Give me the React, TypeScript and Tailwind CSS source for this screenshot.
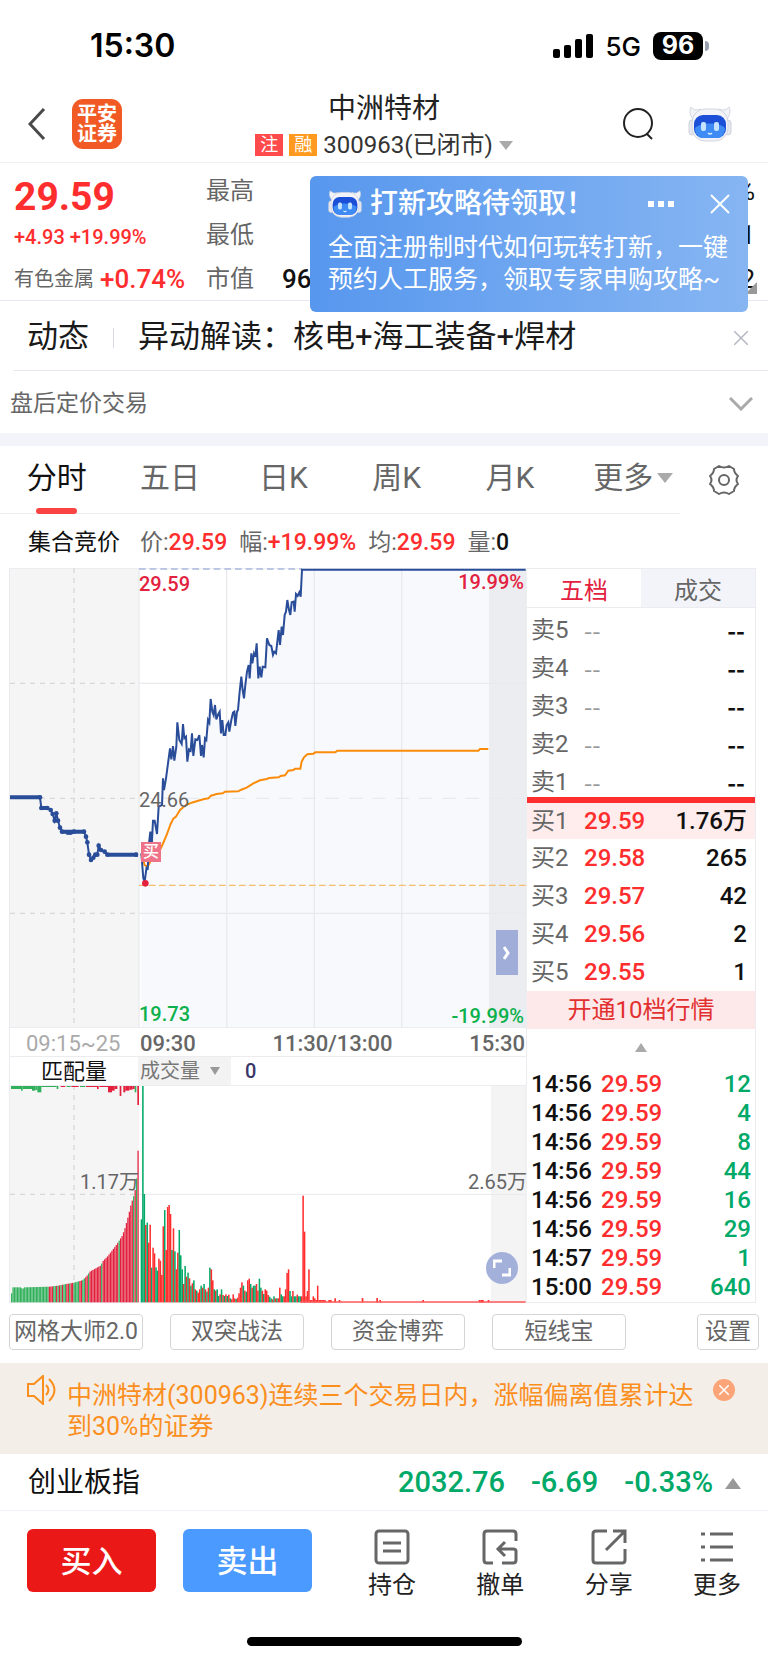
import { useState } from 'react';

const SELLS = ['卖5', '卖4', '卖3', '卖2', '卖1'];

const BUYS = [
  { name: '买1', price: '29.59', volume: '1.76万' },
  { name: '买2', price: '29.58', volume: '265' },
  { name: '买3', price: '29.57', volume: '42' },
  { name: '买4', price: '29.56', volume: '2' },
  { name: '买5', price: '29.55', volume: '1' },
];

const TICKS = [
  { time: '14:56', price: '29.59', volume: '12' },
  { time: '14:56', price: '29.59', volume: '4' },
  { time: '14:56', price: '29.59', volume: '8' },
  { time: '14:56', price: '29.59', volume: '44' },
  { time: '14:56', price: '29.59', volume: '16' },
  { time: '14:56', price: '29.59', volume: '29' },
  { time: '14:57', price: '29.59', volume: '1' },
  { time: '15:00', price: '29.59', volume: '640' },
];

// Chart units are a third of a pixel, the time axis runs from 27 to 1581
const AUCTION_LINE =
  '30,712 120,712 124,744 142,744 152,750 158,762 164,782 169,760 174,782 180,803 186,815 204,818 212,818 222,815 252,815 258,830 262,847 267,884 273,900 280,893 286,884 292,884 296,857 303,870 314,875 322,884 408,884';

const AUCTION_DOTS = AUCTION_LINE.split(' ').map((p) => p.split(',').map(Number));

const PRICE_LINE =
  '424,880 430,955 434,965 440,920 443,930 447,850 451,815 455,860 459,782 464,782 471,822 476,740 486,735 489,655 492,690 498,655 504,610 510,565 514,598 519,558 523,602 529,560 532,487 538,540 545,552 549,492 553,535 558,530 562,605 567,568 572,572 576,520 580,588 586,538 592,540 598,525 603,588 606,555 611,592 615,535 619,540 624,480 628,488 632,417 637,455 641,465 645,435 649,478 655,462 659,455 663,520 667,480 671,525 676,525 680,495 685,487 688,515 694,480 699,458 703,455 706,498 711,455 714,450 719,395 724,350 728,390 732,415 736,375 741,335 746,315 749,355 754,280 757,310 762,280 766,290 770,250 775,355 779,320 784,352 788,320 796,322 801,235 808,255 814,258 819,285 823,275 828,280 836,210 840,255 845,200 849,225 854,165 858,155 862,120 867,150 871,165 875,127 881,125 884,155 888,102 893,108 898,97 902,110 906,29 1577,29';

const AVERAGE_LINE =
  '424,880 434,915 443,920 455,897 480,870 487,855 500,825 512,792 520,776 528,770 540,750 558,735 575,728 592,723 610,718 625,715 633,707 650,702 668,700 675,695 715,694 722,690 740,683 760,670 780,661 800,657 808,654 836,652 842,648 855,646 865,632 880,630 885,626 901,626 905,605 912,592 922,583 940,581 946,577 1006,577 1012,572 1435,572 1440,567 1465,567';

// Top of each one-minute volume bar, 'g' for a falling minute and 'r' for a rising one
const VOLUME_BARS =
  '598g 198g 522g 615r 608g 668r 614r 743g 683r 700r 742g 752g 716r 722r 765r 619r 570g 690r 561r 555r 582r 690g 625r 694g 748r 698r 630g 706g 748g 792r 738g 770r 758g 775r 797g 790r 781g 808r 812g 818r 808r 797g 803r 792g 808r 815g 803r 743g 748r 781r 808g 812r 808g 828g 823r 808g 825r 828g 823r 828g 824r 835g 838r 823r 835r 837g 833r 820r 803r 787r 797g 812r 815g 781r 776r 792g 803r 797g 797g 792r 812r 776g 803g 812r 822g 808r 812r 825r 830g 835g 838r 829g 835r 835g 835r 803r 823g 829g 829r 808r 759r 748r 813g 829g 813r 829g 829g 824r 829g 829g 829r 527r 635r 829r 813r 748r 840r 840r 829r 835r 840r 797r 840r 840r 840r 840r 840r'
    .split(' ')
    .map((bar, i) => ({ x: 422 + i * 4.37, top: parseInt(bar), rising: bar.endsWith('r') }));

const VOLUME_BLIPS = [
  [985, 840], [990, 840], [1003, 835], [1016, 840], [1085, 834], [1129, 834],
  [1138, 840], [1267, 840], [1436, 840], [1441, 840], [1446, 840], [1463, 840],
];

const MATCH_STEPS = [
  [33, 820], [37, 802], [60, 802], [66, 807], [72, 802], [148, 800], [172, 797], [197, 792], [220, 788],
  [245, 781], [257, 770], [268, 755], [280, 748], [300, 737], [308, 722], [320, 710], [332, 695],
  [345, 678], [357, 660], [365, 647], [373, 625], [380, 600], [386, 576], [392, 550], [398, 533],
  [403, 515], [408, 475], [412, 470],
];

const MATCH_BARS = Array.from({ length: 88 }, (_, i) => {
  const x = 33 + i * 4.36;
  if (x >= 412) return { x, top: 392, green: false };
  const next = Math.max(1, MATCH_STEPS.findIndex((s) => s[0] > x));
  const [x0, y0] = MATCH_STEPS[next - 1];
  const [x1, y1] = MATCH_STEPS[next];
  return { x, top: y0 + ((x - x0) / (x1 - x0)) * (y1 - y0), green: isGreenMatch(i) };
});

function isGreenMatch(i: number) {
  if (i < 26) return true;
  return [29, 30, 32, 34, 36, 37, 40, 43, 44, 45, 46, 49, 50, 53, 62, 74, 84, 86].includes(i);
}

const UNMATCHED_BARS = [
  [33, 30, 9, 'g'], [63, 5, 14, 'g'], [68, 28, 9, 'g'], [96, 10, 14, 'g'], [106, 6, 12, 'g'], [112, 12, 19, 'g'],
  [124, 46, 3, 'g'], [170, 5, 9, 'g'], [182, 14, 3, 'r'], [200, 12, 3, 'g'], [214, 22, 3, 'r'], [240, 16, 3, 'g'],
  [258, 34, 3, 'r'], [291, 5, 9, 'r'], [298, 26, 3, 'r'], [324, 12, 19, 'r'], [336, 8, 14, 'r'], [344, 8, 9, 'r'],
  [359, 5, 30, 'r'], [370, 6, 19, 'r'], [376, 12, 14, 'r'], [388, 10, 11, 'r'], [398, 6, 9, 'r'], [404, 5, 19, 'g'], [412, 5, 57, 'r'],
] as const;

const PERIODS = ['分时', '五日', '日K', '周K', '月K'];

function Robot({ className }: { className: string }) {
  return (
    <svg viewBox="0 0 44 36" className={className} aria-hidden="true">
      <path d="M3 1c3 4 7 3 10 2l-7 11C2 10 1 5 3 1ZM41 1c-3 4-7 3-10 2l7 11c4-4 5-9 3-13Z" fill="#f3f4f8" stroke="#d4d6df" />
      <rect x="1" y="14" width="6" height="15" rx="3" fill="#e6e8f0" stroke="#cfd2de" />
      <rect x="37" y="14" width="6" height="15" rx="3" fill="#e6e8f0" stroke="#cfd2de" />
      <rect x="4" y="3" width="36" height="32" rx="13" fill="#f2f3f8" stroke="#d4d6df" />
      <rect x="6" y="9" width="32" height="23" rx="9" fill="#1b4fd8" />
      <path d="M7 22c6-6 24-6 30 0 0 6-3 10-8 10H15c-5 0-8-4-8-10Z" fill="#3f8bf6" />
      <rect x="13" y="16" width="5" height="9" rx="2" fill="#c6e4ff" />
      <rect x="26" y="16" width="5" height="9" rx="2" fill="#c6e4ff" />
      <path d="M20 27q2 2 4 0" stroke="#d8edff" strokeWidth="1.5" fill="none" />
    </svg>
  );
}

function Triangle({ up, className }: { up?: boolean; className: string }) {
  return (
    <svg viewBox="0 0 16 10" preserveAspectRatio="none" className={className} aria-hidden="true">
      <path d={up ? 'M0 10h16L8 0Z' : 'M0 0h16L8 10Z'} fill="currentColor" />
    </svg>
  );
}

function StatusBar() {
  return (
    <div className="flex h-[92px] items-center justify-between pr-[59px] pl-[90px] font-['Inter',sans-serif] text-black">
      <span className="text-[32px] font-semibold">15:30</span>
      <div className="flex items-center">
        <svg viewBox="0 0 40 26" className="h-[26px] w-10" aria-hidden="true">
          <rect x="0" y="16" width="7" height="9" rx="2" />
          <rect x="11" y="12" width="7" height="13" rx="2" />
          <rect x="22" y="6" width="7" height="19" rx="2" />
          <rect x="33" y="1" width="7" height="24" rx="2" />
        </svg>
        <span className="ml-3 text-[26px] font-medium">5G</span>
        <span className="ml-3 flex h-7 w-[50px] items-center justify-center rounded-lg bg-black text-[25px] font-bold text-white">96</span>
        <span className="ml-0.5 h-2.5 w-1 rounded-r-full bg-gray-400" />
      </div>
    </div>
  );
}

function Header() {
  return (
    <header className="flex h-[71px] items-center justify-between border-b border-[#f0f0f2] pr-9 pl-7">
      <div className="flex w-[188px] items-center gap-[26px] pb-1.5">
        <button aria-label="返回">
          <svg viewBox="0 0 18 32" className="h-8 w-[18px]" fill="none" stroke="#4a4a4a" strokeWidth="3">
            <path d="M16 1 2 16l14 15" />
          </svg>
        </button>
        <a href="#home" className="flex h-[50px] w-[50px] flex-col items-center justify-center rounded-[11px] bg-[#f15a24] text-[20px] leading-5 font-bold text-white">
          平安
          <br />
          证券
        </a>
      </div>
      <div className="flex flex-col items-center">
        <h1 className="text-[28px] leading-9 font-normal text-[#222]">中洲特材</h1>
        <button className="flex items-center text-[24px] leading-9 text-[#333]">
          <span className="mr-1.5 flex h-[22px] w-7 items-center justify-center bg-[#ff4b4b] text-[18px] text-white">注</span>
          <span className="mr-1.5 flex h-[22px] w-7 items-center justify-center bg-[#ff9a1f] text-[18px] text-white">融</span>
          300963(已闭市)
          <Triangle className="ml-1.5 h-[9px] w-3.5 text-[#aaa]" />
        </button>
      </div>
      <div className="flex w-[180px] items-center justify-end gap-[34px] pb-1.5">
        <button aria-label="搜索">
          <svg viewBox="0 0 32 34" className="h-[34px] w-8" fill="none" stroke="#222" strokeWidth="2">
            <circle cx="16" cy="16" r="14" />
            <path d="m25 27 5 5" />
          </svg>
        </button>
        <button aria-label="智能客服">
          <Robot className="h-9 w-11" />
        </button>
      </div>
    </header>
  );
}

function Promo({ onClose }: { onClose: () => void }) {
  return (
    <div className="absolute top-[13px] right-5 h-[136px] w-[438px] rounded-md bg-linear-to-r from-[#5797ee] to-[#86b5f2] px-[18px] pt-2.5 text-white">
      <div className="flex h-9 items-center">
        <Robot className="h-7 w-[34px]" />
        <strong className="ml-2 text-[28px] font-medium">打新攻略待领取！</strong>
        <button aria-label="更多选项" className="ml-auto flex gap-1">
          <span className="h-1.5 w-1.5 bg-white" />
          <span className="h-1.5 w-1.5 bg-white" />
          <span className="h-1.5 w-1.5 bg-white" />
        </button>
        <button aria-label="关闭" className="ml-9" onClick={onClose}>
          <svg viewBox="0 0 20 20" className="h-5 w-5" stroke="currentColor" strokeWidth="2">
            <path d="m1 1 18 18M19 1 1 19" />
          </svg>
        </button>
      </div>
      <p className="mt-2.5 text-[25px] leading-8 whitespace-nowrap">
        全面注册制时代如何玩转打新，一键
        <br />
        预约人工服务，领取专家申购攻略~
      </p>
    </div>
  );
}

function Quote() {
  const [promo, setPromo] = useState(true);

  return (
    <section className="relative flex h-[138px] border-b border-[#e6e8f1] pr-[13px] pl-3.5">
      <div className="flex w-48 flex-col text-[#ff2e2e]">
        <span className="mt-2.5 text-[39px] leading-12 font-bold">29.59</span>
        <span className="text-[20px] leading-8 font-medium">+4.93 +19.99%</span>
        <span className="mt-1.5 flex items-center gap-1.5 text-[26px] leading-10 font-medium">
          <span className="text-[20px] font-normal text-[#666]">有色金属</span>+0.74%
        </span>
      </div>
      <dl className="flex-1 pt-1.5 text-[24px] leading-11 text-[#666]">
        <div className="flex justify-between">
          <dt>最高</dt>
          <dd className="text-[26px] text-[#111]">%</dd>
        </div>
        <div className="flex justify-between">
          <dt>最低</dt>
          <dd className="text-[26px] text-[#111]">1</dd>
        </div>
        <div className="flex">
          <dt>市值</dt>
          <dd className="ml-7 text-[26px] font-medium text-[#111]">96</dd>
          <dd className="ml-auto text-[26px] text-[#111]">2</dd>
        </div>
      </dl>
      <svg viewBox="0 0 12 12" className="absolute right-[11px] bottom-1.5 h-3 w-3" aria-hidden="true">
        <path d="M12 0v12H0Z" fill="#999" />
      </svg>
      {promo && <Promo onClose={() => setPromo(false)} />}
    </section>
  );
}

function News() {
  return (
    <>
      <div className="ml-[13px] flex h-[70px] items-center border-b border-[#e6e8f1] pt-1 pr-5 pl-3.5 text-[31px] text-[#1a1a1a]">
        <span>动态</span>
        <span className="ml-6 h-5 w-px bg-[#d5d8e2]" />
        <a href="#news" className="ml-6">异动解读：核电+海工装备+焊材</a>
        <button aria-label="关闭" className="ml-auto">
          <svg viewBox="0 0 14 14" className="h-3.5 w-3.5" stroke="#b5b8c4" strokeWidth="1.5">
            <path d="m0 0 14 14M14 0 0 14" />
          </svg>
        </button>
      </div>
      <button className="flex h-[62px] w-full items-center justify-between pt-1 pr-[15px] pl-2.5 text-[23px] text-[#666]">
        盘后定价交易
        <svg viewBox="0 0 24 14" className="h-3.5 w-6" fill="none" stroke="#aaa" strokeWidth="3">
          <path d="m1 1 11 11L23 1" />
        </svg>
      </button>
      <div className="h-[13px] bg-[#f3f4f9]" />
    </>
  );
}

function PeriodTabs() {
  const [period, setPeriod] = useState('分时');

  return (
    <nav className="flex h-[68px] pr-[29px]">
      <div className="grid flex-1 grid-cols-6 border-b border-[#eeeef0] text-[30px] text-[#666]">
        {PERIODS.map((p) => (
          <button key={p} onClick={() => setPeriod(p)} className={`relative flex items-center justify-center pb-1 ${p === period ? 'text-[#111]' : ''}`}>
            {p}
            {p === period && <span className="absolute -bottom-px h-1.5 w-[41px] rounded-sm bg-[#fa4444]" />}
          </button>
        ))}
        <button className="flex items-center justify-center gap-1 pb-1 pl-5">
          更多
          <Triangle className="h-2.5 w-4 text-[#aaa]" />
        </button>
      </div>
      <button aria-label="图表设置" className="ml-[29px]">
        <svg viewBox="0 0 30 30" className="h-[30px] w-[30px]" fill="none" stroke="#666" strokeWidth="2" strokeLinejoin="round">
          <path d="M10 1q5 3 10 0l5 3q0 4 4 7-3 4 0 8-4 3-4 7l-5 3q-5-3-10 0l-5-3q0-4-4-7 3-4 0-8 4-3 4-7Z" />
          <circle cx="15" cy="15" r="5" />
        </svg>
      </button>
    </nav>
  );
}

function PriceChart() {
  return (
    <div className="relative h-[460px]">
      <svg viewBox="27 24 1554 1380" preserveAspectRatio="none" className="h-full w-full">
        <rect x="27" y="24" width="390" height="1380" fill="#f5f5f5" />
        <polygon points={`424,1404 ${PRICE_LINE} 1577,1404`} fill="#f7f9fd" />
        <rect x="1467" y="30" width="112" height="1374" fill="#ecedf1" />
        <g stroke="#e9eaee" strokeWidth="4" fill="none">
          <path d="M28 24h1550v1380H28ZM417 24v1380M680 24v1380M943 24v1380M1205 24v1380M417 370h1160M417 1060h1160" />
          <path d="M417 715h1160" strokeDasharray="40 30" />
        </g>
        <path d="M222 24v1380M30 370h387M30 715h387M30 1060h387" stroke="#d8d8d8" strokeWidth="4" strokeDasharray="15 15" />
        <path d="M417 976h1160" stroke="#f5bd6c" strokeWidth="4" strokeDasharray="20 10" />
        <path d="M417 27h490" stroke="#a9b8dc" strokeWidth="5" strokeDasharray="20 12" />
        <polyline points={AVERAGE_LINE} fill="none" stroke="#fb8c0a" strokeWidth="6" />
        <polyline points={PRICE_LINE} fill="none" stroke="#2a4d99" strokeWidth="6" />
        <polyline points={AUCTION_LINE} fill="none" stroke="#2a4d99" strokeWidth="6" />
        <path d="M30 712h92M122 744h22M186 815h66M322 884h92" stroke="#2a4d99" strokeWidth="12" />
        {AUCTION_DOTS.slice(1).map(([x, y]) => (
          <circle key={x} cx={x} cy={y} r="7" fill="#2a4d99" />
        ))}
        <circle cx="436" cy="970" r="10" fill="#e3213e" />
      </svg>
      <div className="absolute inset-y-0 right-[3px] left-[130px] text-[20px] leading-6 font-medium">
        <span className="absolute top-1 left-0 text-[#e3213e]">29.59</span>
        <span className="absolute top-0.5 right-0 text-[#e3213e]">19.99%</span>
        <span className="absolute top-[220px] left-0 font-normal text-[#666]">24.66</span>
        <span className="absolute bottom-0.5 left-0 text-[#0cb14b]">19.73</span>
        <span className="absolute right-0 bottom-0 text-[#0cb14b]">-19.99%</span>
        <span className="absolute top-[274px] left-0.5 flex h-5 w-5 items-center justify-center bg-[#ee7388] text-[16px] text-white">买</span>
        <button aria-label="收起盘口" className="absolute right-1.5 bottom-[53px] flex h-[45px] w-[22px] items-center justify-center bg-[#9fadd8]">
          <svg viewBox="0 0 8 14" className="h-3.5 w-2" fill="none" stroke="#fff" strokeWidth="3">
            <path d="m1 1 4 6-4 6" />
          </svg>
        </button>
      </div>
    </div>
  );
}

function VolumeChart() {
  return (
    <div className="relative h-[218px]">
      <svg viewBox="27 195 1554 654" preserveAspectRatio="none" className="h-full w-full">
        <rect x="27" y="195" width="390" height="654" fill="#f5f5f5" />
        <rect x="1473" y="195" width="106" height="654" fill="#f4f4f4" />
        <path d="M28 196h1550v651H28ZM417 523h1160" stroke="#e9eaee" strokeWidth="3" fill="none" />
        <path d="M222 195v652M30 523h387" stroke="#d8d8d8" strokeWidth="4" strokeDasharray="15 15" />
        {MATCH_BARS.map((b, i) => (
          <rect key={i} x={b.x} y={b.top} width="3.8" height={847 - b.top} fill={b.green ? '#30b05a' : '#e3213e'} />
        ))}
        {UNMATCHED_BARS.map(([x, w, h, c]) => (
          <rect key={x} x={x} y="198" width={w} height={h} fill={c === 'g' ? '#30b05a' : '#e3213e'} />
        ))}
        {VOLUME_BARS.map((b) => (
          <rect key={b.x} x={b.x} y={b.top} width="4.6" height={847 - b.top} fill={b.rising ? '#ff2e2e' : '#00a968'} />
        ))}
        {VOLUME_BLIPS.map(([x, y]) => (
          <rect key={x} x={x} y={y} width="5" height={847 - y} fill="#ff2e2e" />
        ))}
        <path d="M900 846h677" stroke="#ff5a5a" strokeWidth="4" />
      </svg>
      <span className="absolute top-[85px] left-[71px] text-[20px] leading-6 text-[#666]">1.17万</span>
      <span className="absolute top-[85px] right-0 text-[20px] leading-6 text-[#666]">2.65万</span>
      <button aria-label="全屏" className="absolute right-[9px] bottom-[19px] flex h-8 w-8 items-center justify-center rounded-full bg-[#a3b1da]">
        <svg viewBox="0 0 18 18" className="h-[18px] w-[18px]" fill="none" stroke="#fff" strokeWidth="3">
          <path d="M1 9V2h8M17 9v7H9" />
        </svg>
      </button>
    </div>
  );
}

function OrderBook() {
  return (
    <aside className="flex w-[229px] flex-col border-r border-[#ececf0] text-[24px]">
      <div className="mb-[3px] flex h-10 border-y border-[#ececf0]">
        <button className="flex-1 pt-1 text-[#e3213e]">五档</button>
        <button className="flex-1 bg-[#f3f4f9] pt-1 text-[#666]">成交</button>
      </div>
      <table className="w-full">
        <tbody>
          {SELLS.map((name) => (
            <tr key={name} className="h-[38px] leading-[38px]">
              <th scope="row" className="w-[57px] p-0 pl-1 text-left font-normal text-[#666]">{name}</th>
              <td className="p-0 font-['Noto_Sans_CJK_SC',sans-serif] text-[#999]">--</td>
              <td className="p-0 pr-2.5 text-right font-['Noto_Sans_CJK_SC',sans-serif] font-bold text-[#111]">--</td>
            </tr>
          ))}
        </tbody>
      </table>
      <div className="-mt-1 h-1.5 bg-[#ff2e2e]" />
      <table className="w-full">
        <tbody>
          {BUYS.map((row) => (
            <tr key={row.name} className="h-[38px] leading-[38px] first:h-9 first:bg-[#ffecec] first:leading-9">
              <th scope="row" className="w-[57px] p-0 pl-1 text-left font-normal text-[#666]">{row.name}</th>
              <td className="p-0 font-medium text-[#ff2e2e]">{row.price}</td>
              <td className="p-0 pr-2 text-right font-medium text-[#111]">{row.volume}</td>
            </tr>
          ))}
        </tbody>
      </table>
      <a href="#level10" className="flex h-[38px] items-center justify-center bg-[#fde9e9] text-[#e23030]">开通10档行情</a>
      <button aria-label="展开明细" className="flex h-[41px] items-center justify-center pb-1">
        <Triangle up className="h-[9px] w-3 text-[#aaa]" />
      </button>
      <table className="w-full border-b border-[#ececf0]">
        <tbody>
          {TICKS.map((tick, i) => (
            <tr key={i} className="h-[29px] leading-[29px] font-medium">
              <td className="w-[74px] p-0 pl-1 text-[#111]">{tick.time}</td>
              <td className="p-0 text-[#ff2e2e]">{tick.price}</td>
              <td className="p-0 pr-1 text-right text-[#00a968]">{tick.volume}</td>
            </tr>
          ))}
        </tbody>
      </table>
    </aside>
  );
}

function Footer() {
  return (
    <footer className="flex items-start pt-[18px] pr-[27px] pl-[27px]">
      <button className="h-[63px] w-[129px] rounded-md bg-[#eb1818] pt-1 text-[31px] font-medium text-white">买入</button>
      <button className="ml-[27px] h-[63px] w-[129px] rounded-md bg-[#4b9aff] pt-1 text-[31px] font-medium text-white">卖出</button>
      <div className="ml-14 flex flex-1 justify-between text-[24px] leading-8 text-[#222]">
        <button className="flex flex-col items-center gap-1">
          <svg viewBox="0 0 36 36" className="h-9 w-9" fill="none" stroke="#666" strokeWidth="3">
            <rect x="2" y="2" width="32" height="32" rx="3" />
            <path d="M9 14h18M9 22h18" />
          </svg>
          持仓
        </button>
        <button className="flex flex-col items-center gap-1">
          <svg viewBox="0 0 36 36" className="h-9 w-9" fill="none" stroke="#666" strokeWidth="3">
            <path d="M34 12V5q0-3-3-3H5Q2 2 2 5v26q0 3 3 3h6M20 34h11q3 0 3-3V22q0-2-3-2H17M23 13l-7 7 7 7" />
          </svg>
          撤单
        </button>
        <button className="flex flex-col items-center gap-1">
          <svg viewBox="0 0 36 36" className="h-9 w-9" fill="none" stroke="#666" strokeWidth="3">
            <path d="M16 2H5Q2 2 2 5v26q0 3 3 3h26q3 0 3-3V20M22 2h12v12M34 2 15 21" />
          </svg>
          分享
        </button>
        <button className="flex flex-col items-center gap-1">
          <svg viewBox="0 0 36 36" className="h-9 w-9" fill="none" stroke="#666" strokeWidth="3">
            <path d="M2 5h4M11 5h23M2 18h4M11 18h23M2 31h4M11 31h23" />
          </svg>
          更多
        </button>
      </div>
    </footer>
  );
}

export default function App() {
  return (
    <div className="min-h-screen bg-white font-['Roboto','Noto_Sans_CJK_SC',sans-serif]">
      <StatusBar />
      <Header />
      <Quote />
      <News />
      <PeriodTabs />

      <div className="flex h-[54px] items-center pt-1 pl-7 text-[23px] text-[#666]">
        <span className="mr-5 text-[#111]">集合竞价</span>
        <span className="mr-3">价:<b className="font-medium text-[#ff2e2e]">29.59</b></span>
        <span className="mr-3">幅:<b className="font-medium text-[#ff2e2e]">+19.99%</b></span>
        <span className="mr-3">均:<b className="font-medium text-[#ff2e2e]">29.59</b></span>
        <span>量:<b className="font-medium text-[#111]">0</b></span>
      </div>

      <main className="flex pr-[12px] pl-[9px]">
        <div className="min-w-0 flex-1">
          <PriceChart />
          <div className="flex h-7 items-center border-x border-[#ececf0] pt-0.5 text-[22px] font-medium text-[#666]">
            <span className="w-[130px] pl-4 font-normal text-[#aaa]">09:15~25</span>
            <span className="flex-1">09:30</span>
            <span className="flex-1 text-center">11:30/13:00</span>
            <span className="flex-1 pr-px text-right">15:30</span>
          </div>
          <div className="flex h-[29px] items-center border border-b-0 border-[#ececf0] text-[20px]">
            <span className="w-[128px] text-center text-[22px] text-[#111]">匹配量</span>
            <button className="flex h-full w-[93px] items-center gap-2.5 bg-[#f3f3f3] pl-0.5 text-[#777]">
              成交量
              <Triangle className="h-2 w-2.5 text-[#999]" />
            </button>
            <span className="ml-3.5 font-medium text-[#3a3768]">0</span>
          </div>
          <VolumeChart />
        </div>
        <OrderBook />
      </main>

      <div className="flex items-center gap-[27px] px-[9px] pt-[11px] pb-[13px] text-[23px] text-[#666]">
        {['网格大师2.0', '双突战法', '资金博弈', '短线宝'].map((name) => (
          <button key={name} className="h-9 w-[134px] rounded border border-[#d5d5d5] whitespace-nowrap">{name}</button>
        ))}
        <button className="ml-auto h-9 w-[62px] rounded border border-[#d5d5d5]">设置</button>
      </div>

      <div className="flex h-[91px] bg-[#f4eee8] pt-3 pr-[33px] pl-[27px] text-[#fb8f1e]">
        <svg viewBox="0 0 30 30" className="h-[30px] w-[30px]" fill="none" stroke="currentColor" strokeWidth="2">
          <path d="M1 9h6l9-8v28l-9-8H1ZM19 10q5 5 0 10M22 4q11 11 0 22" />
        </svg>
        <p className="ml-2.5 flex-1 pt-[5px] text-[25px] leading-[31px]">
          中洲特材(300963)连续三个交易日内，涨幅偏离值累计达到30%的证券
        </p>
        <button aria-label="关闭" className="mt-1 ml-2 flex h-[22px] w-[22px] items-center justify-center rounded-full bg-[#fba477]">
          <svg viewBox="0 0 10 10" className="h-2.5 w-2.5" stroke="#fff" strokeWidth="1.5">
            <path d="m0 0 10 10M10 0 0 10" />
          </svg>
        </button>
      </div>

      <button className="flex h-[57px] w-full items-center border-b border-[#eef0fa] pt-0.5 pr-[27px] pl-7 text-[29px] font-medium text-[#00a968]">
        <span className="mr-auto text-[28px] font-normal text-[#111]">创业板指</span>
        <span>2032.76</span>
        <span className="ml-[26px]">-6.69</span>
        <span className="ml-[26px]">-0.33%</span>
        <Triangle up className="ml-3 h-[11px] w-4 text-[#999]" />
      </button>

      <Footer />
      <div className="mx-auto mt-9 h-[9px] w-[275px] rounded-full bg-black" />
    </div>
  );
}
